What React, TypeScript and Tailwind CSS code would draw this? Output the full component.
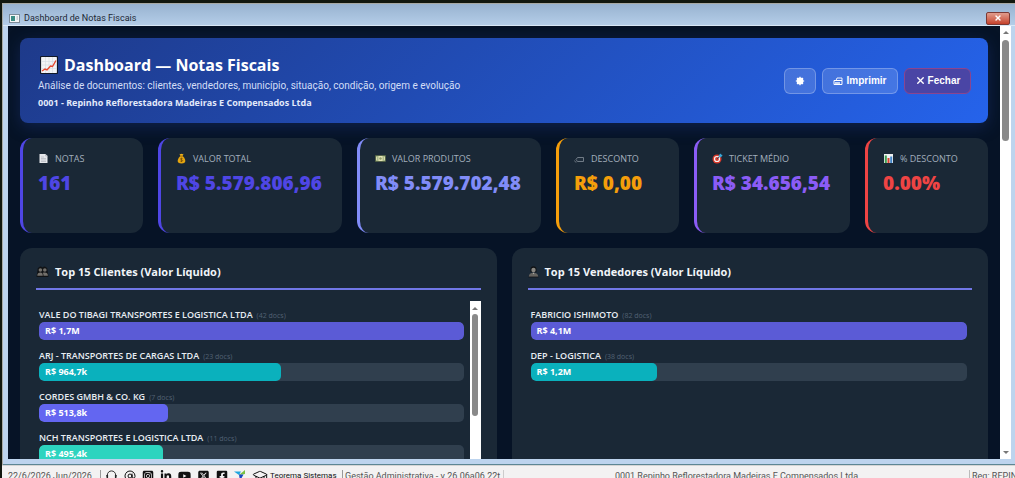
import type { ReactNode } from 'react';
import { AtSign, GraduationCap, X } from 'lucide-react';
import { FaFacebookSquare, FaLinkedinIn, FaYoutube } from 'react-icons/fa';
import { FaSquareInstagram, FaSquareXTwitter } from 'react-icons/fa6';

interface Kpi {
    label: string;
    value: string;
    color: string;
    icon: ReactNode;
}

interface RankItem {
    name: string;
    docs: number;
    value: string;
    percent: number;
    color: string;
}

/* Small pictograms */
function TrendIcon() {
    return (
        <svg viewBox="0 0 18 18" className="w-[18px] h-[18px] shrink-0" aria-hidden="true">
            <rect x="0.5" y="0.5" width="17" height="17" rx="1" fill="#f3f4f6" stroke="#111827" strokeWidth="1.2" />
            <path d="M1 5.5h16M1 9h16M1 12.5h16M5.5 1v16M9 1v16M12.5 1v16" stroke="#d5dae0" strokeWidth="0.6" />
            <path d="M2 15l3-2 2 1 3.5-4 2 .5L16 4.5" fill="none" stroke="#e8492f" strokeWidth="1.4" />
        </svg>
    );
}

function PageIcon() {
    return (
        <svg viewBox="0 0 11 11" className="w-[11px] h-[11px] shrink-0" aria-hidden="true">
            <path d="M1.5 1h6l2 2v7h-8z" fill="#e5e7eb" />
            <path d="M7.5 1v2h2M3 4h3M3 5.5h5M3 7h5M3 8.5h5" fill="none" stroke="#a8adb5" strokeWidth="0.6" />
        </svg>
    );
}

function MoneyBagIcon() {
    return (
        <svg viewBox="0 0 11 11" className="w-[11px] h-[11px] shrink-0" aria-hidden="true">
            <path d="M3.5 .8l1 .5 1-.5 1 .5 1-.5-.8 2.2h-2.4z" fill="#f2b61c" />
            <path d="M4.3 3h2.4c1.6 1.5 2.6 3.3 2.6 5 0 1.6-1.1 2.4-3.8 2.4S1.7 9.600 1.7 8c0-1.7 1-3.5 2.6-5z" fill="#e5a50f" />
            <path d="M4.1 3h2.8" stroke="#8a5a08" strokeWidth="0.8" />
            <path d="M6.6 5.6c-.4-.5-2.2-.5-2.2.4s2.300.6 2.3 1.6-2 1-2.5.3M5.5 4.8v4.2" fill="none" stroke="#6d4706" strokeWidth="0.7" />
        </svg>
    );
}

function BanknoteIcon() {
    return (
        <svg viewBox="0 0 11 11" className="w-[11px] h-[11px] shrink-0" aria-hidden="true">
            <rect x="0.5" y="2.5" width="10" height="6" fill="#a9b98a" stroke="#4b5a3b" strokeWidth="0.6" />
            <rect x="3.5" y="3" width="4" height="5" fill="#e4e3b4" />
            <circle cx="5.5" cy="5.5" r="1.2" fill="#8d9c6b" />
            <path d="M1.5 4v3M9.5 4v3" stroke="#e4e3b4" strokeWidth="0.8" />
        </svg>
    );
}

function TagIcon() {
    return (
        <svg viewBox="0 0 11 11" className="w-[11px] h-[11px] shrink-0" aria-hidden="true">
            <path d="M3.5 4.5h6v4h-6L2 6.5z" fill="#1f2d3b" stroke="#7a8590" strokeWidth="0.9" />
            <path d="M.5 7.5c0 1 .7 1.5 2 1.5" fill="none" stroke="#7a8590" strokeWidth="0.8" />
        </svg>
    );
}

function TargetIcon() {
    return (
        <svg viewBox="0 0 11 11" className="w-[11px] h-[11px] shrink-0" aria-hidden="true">
            <circle cx="5" cy="6" r="4.5" fill="#d93a2b" />
            <circle cx="5" cy="6" r="3.1" fill="#f5f5f5" />
            <circle cx="5" cy="6" r="1.9" fill="#d93a2b" />
            <path d="M5 6l3.5-3.5" stroke="#243b53" strokeWidth="0.8" />
            <path d="M6.8 4.2V2L9 .4l.3 1.3 1.4.4L9 4.2z" fill="#39a8d8" />
        </svg>
    );
}

function BarsIcon() {
    return (
        <svg viewBox="0 0 11 11" className="w-[11px] h-[11px] shrink-0" aria-hidden="true">
            <rect x="1" y="1" width="9" height="9" fill="#eef0f2" />
            <rect x="1.8" y="2.5" width="2" height="7.5" fill="#3f9f4f" />
            <rect x="4.5" y="5" width="2" height="5" fill="#d8432f" />
            <rect x="7.2" y="3.5" width="2" height="6.5" fill="#4285c9" />
        </svg>
    );
}

function PeopleIcon() {
    return (
        <svg viewBox="0 0 13 13" className="w-[13px] h-[13px] shrink-0" aria-hidden="true">
            <path d="M1.5 5a3 3 0 0 1 5-2.6A3 3 0 0 1 11.5 5l1 7H.5z" fill="#111315" />
            <g fill="#74716c">
                <circle cx="4.4" cy="5" r="1.8" />
                <circle cx="8.8" cy="5" r="1.8" />
                <path d="M1.3 10.8c0-2 1.2-3.2 3.1-3.2 1.7 0 2.4 1 2.4 3.2zM7.5 10.8c0-1.5-.2-2.3-.8-2.9.6-.3 1.2-.3 2.1-.3 1.9 0 3.1 1.2 3.1 3.2z" />
            </g>
        </svg>
    );
}

function SellerIcon() {
    return (
        <svg viewBox="0 0 11 13" className="w-[11px] h-[13px] shrink-0" aria-hidden="true">
            <path d="M2.5 4.2a3 3 0 0 1 6 0v3h-6z" fill="#111315" />
            <circle cx="5.5" cy="5" r="2.2" fill="#8a8782" />
            <path d="M.8 12c0-2.8 1.7-4.2 4.7-4.2s4.7 1.4 4.7 4.2z" fill="#65635f" />
            <path d="M4.5 7.8l1 1.5 1-1.5z" fill="#b5b3af" />
            <path d="M.5 12h10" stroke="#111315" strokeWidth="0.8" />
        </svg>
    );
}

function SunIcon() {
    return (
        <svg viewBox="0 0 10 10" className="w-2.5 h-2.5" aria-hidden="true">
            <circle cx="5" cy="5" r="3.4" fill="#fff" />
            <path d="M5 .8v8.4M.8 5h8.4M2 2l6 6M8 2L2 8" stroke="#fff" strokeWidth="1.2" />
        </svg>
    );
}

function PrinterIcon() {
    return (
        <svg viewBox="0 0 10 10" className="w-2.5 h-2.5" fill="none" stroke="#fff" aria-hidden="true">
            <path d="M3 4.5l1-2.5h5v2.5" strokeWidth="0.9" />
            <path d="M1 4.5h8v4H1z" strokeWidth="1" />
            <path d="M2 7h5" strokeWidth="1.4" />
        </svg>
    );
}

function HeadsetIcon() {
    return (
        <svg viewBox="0 0 13 13" className="w-[13px] h-3 shrink-0" aria-hidden="true">
            <path d="M2 7V5.5a4.5 4.5 0 0 1 9 0V7" fill="none" stroke="#222" />
            <path d="M.8 5.5h2v4h-1.5zM10.2 5.5h2l-.5 4h-1.5z" fill="#222" />
        </svg>
    );
}

function BrandIcon() {
    return (
        <svg viewBox="0 0 12 12" className="w-3 h-3 shrink-0" aria-hidden="true">
            <path d="M0 1.5h7L5 5z" fill="#1ea6e0" />
            <path d="M11 0v4L5 5z" fill="#7ac143" />
            <path d="M5 4.5h4.5L6 11z" fill="#1746c4" />
        </svg>
    );
}

const kpis: Kpi[] = [
    { label: 'NOTAS', value: '161', color: 'border-[#4f46e5] text-[#4f46e5]', icon: <PageIcon /> },
    { label: 'VALOR TOTAL', value: 'R$ 5.579.806,96', color: 'border-[#4f46e5] text-[#4f46e5]', icon: <MoneyBagIcon /> },
    { label: 'VALOR PRODUTOS', value: 'R$ 5.579.702,48', color: 'border-[#818cf8] text-[#818cf8]', icon: <BanknoteIcon /> },
    { label: 'DESCONTO', value: 'R$ 0,00', color: 'border-[#f59e0b] text-[#f59e0b]', icon: <TagIcon /> },
    { label: 'TICKET MÉDIO', value: 'R$ 34.656,54', color: 'border-[#8b5cf6] text-[#8b5cf6]', icon: <TargetIcon /> },
    { label: '% DESCONTO', value: '0.00%', color: 'border-[#ef4444] text-[#ef4444]', icon: <BarsIcon /> },
];

const clientes: RankItem[] = [
    { name: 'VALE DO TIBAGI TRANSPORTES E LOGISTICA LTDA', docs: 42, value: 'R$ 1,7M', percent: 100, color: 'bg-[#5b5bd6]' },
    { name: 'ARJ - TRANSPORTES DE CARGAS LTDA', docs: 23, value: 'R$ 964,7k', percent: 57, color: 'bg-[#0ab1bd]' },
    { name: 'CORDES GMBH & CO. KG', docs: 7, value: 'R$ 513,8k', percent: 30.4, color: 'bg-[#6366f1]' },
    { name: 'NCH TRANSPORTES E LOGISTICA LTDA', docs: 11, value: 'R$ 495,4k', percent: 29.3, color: 'bg-[#2dd4bf]' },
];

const vendedores: RankItem[] = [
    { name: 'FABRICIO ISHIMOTO', docs: 82, value: 'R$ 4,1M', percent: 100, color: 'bg-[#5b5bd6]' },
    { name: 'DEP - LOGISTICA', docs: 38, value: 'R$ 1,2M', percent: 29, color: 'bg-[#0ab1bd]' },
];

function KpiCard({ label, value, color, icon }: Kpi) {
    return (
        <div className={`h-[95px] min-w-0 rounded-xl border-l-[3px] bg-[#1a2836] pl-[15px] pt-3 ${color}`}>
            <div className="flex items-center gap-1.5 h-[17px] text-[9px] text-[#a3afbd]">
                {icon}
                <span>{label}</span>
            </div>
            <div className="mt-1 font-['Noto_Sans',sans-serif] text-[19px] leading-6 font-black whitespace-nowrap">{value}</div>
        </div>
    );
}

function RankRow({ name, docs, value, percent, color }: RankItem) {
    return (
        <li className="h-[41px]">
            <div className="flex items-baseline gap-1 h-[15px] leading-[15px] text-[9px] font-semibold text-[#e8edf3] whitespace-nowrap">
                {name}
                <span className="text-[7px] font-normal text-[#526173]">({docs} docs)</span>
            </div>
            <div className="h-[18px] rounded-[5px] bg-[#303f4e] overflow-hidden">
                <div
                    className={`h-full rounded-[5px] pl-1.5 text-[9px] leading-[18px] font-bold text-white whitespace-nowrap ${color}`}
                    style={{ width: `${percent}%` }}
                >
                    {value}
                </div>
            </div>
        </li>
    );
}

interface RankPanelProps {
    title: string;
    icon: ReactNode;
    items: RankItem[];
    scroll?: boolean;
}

function RankPanel({ title, icon, items, scroll }: RankPanelProps) {
    return (
        <section className="flex flex-col flex-1 min-w-0 min-h-0 rounded-t-xl bg-[#1a2836] px-4 pt-2.5">
            <h2 className="flex items-center gap-1.5 h-[27px] pb-[3px] shrink-0 box-content border-b-2 border-[#7177e6] text-[11px] leading-5 font-bold text-[#f1f5f9]">
                {icon}
                {title}
            </h2>
            <div className="flex flex-1 min-h-0 mt-[11px] overflow-hidden">
                <ul className={`flex-1 min-w-0 pl-[3px] pt-1.5 ${scroll ? 'pr-1.5' : 'pr-[5px]'}`}>
                    {items.map((item) => (
                        <RankRow key={item.name} {...item} />
                    ))}
                </ul>
                {scroll && (
                    <div className="flex flex-col items-center w-[11px] bg-white pt-1.5">
                        <span className="border-x-[3px] border-b-[3px] border-x-transparent border-b-[#777]" />
                        <span className="mt-1 w-1.5 h-[102px] rounded-full bg-[#898989]" />
                    </div>
                )}
            </div>
        </section>
    );
}

function Header() {
    return (
        <header className="flex items-center justify-between h-[85px] shrink-0 rounded-lg bg-linear-[135deg] from-[#1e3a8a] to-[#2563eb] pl-[18px] pr-[17px] text-white shadow-[0_4px_16px_#1e3a8a66]">
            <div className="pt-[3px]">
                <h1 className="flex items-center gap-1.5 pl-0.5 text-[16px] leading-6 font-bold">
                    <TrendIcon />
                    Dashboard — Notas Fiscais
                </h1>
                <p className="font-[Roboto,sans-serif] text-[10px] leading-[17px] text-[#d3def7]">
                    Análise de documentos: clientes, vendedores, município, situação, condição, origem e evolução
                </p>
                <p className="text-[9px] leading-[17px] font-bold text-[#e3eafb]">
                    0001 - Repinho Reflorestadora Madeiras E Compensados Ltda
                </p>
            </div>
            <div className="flex gap-1.5 font-['Liberation_Sans',sans-serif] text-[10px] font-bold">
                <button aria-label="Alternar tema" className="flex items-center justify-center w-8 h-[26px] rounded-md border border-white/25 bg-white/15">
                    <SunIcon />
                </button>
                <button className="flex items-center justify-center gap-[3px] w-[76px] h-[26px] rounded-md border border-white/25 bg-white/15">
                    <PrinterIcon />
                    Imprimir
                </button>
                <button className="flex items-center justify-center gap-0.5 w-[67px] h-[26px] rounded-md border border-[#8a4590] bg-[#4a45a5]">
                    <X className="w-[11px] h-[11px]" strokeWidth={3} />
                    Fechar
                </button>
            </div>
        </header>
    );
}

function TitleBar() {
    return (
        <div className="flex items-center justify-between h-[22px] shrink-0 border-b border-[#d9e8f6] bg-linear-to-b from-[#98b3d0] to-[#b4cde8] pt-[7px] pl-1.5 pr-[5px]">
            <div className="flex items-center gap-1 font-[Roboto,sans-serif] text-[9px] leading-3 text-[#1c2733]">
                <svg viewBox="0 0 11 9" className="w-[11px] h-[9px]" aria-hidden="true">
                    <rect x="0.5" y="0.5" width="10" height="8" fill="#f4f6f7" stroke="#7c8b98" />
                    <rect x="2" y="2" width="4" height="5" fill="#3b8c83" />
                    <path d="M7.5 3h1.5M7.5 5h1.5" stroke="#9aa7b1" />
                </svg>
                Dashboard de Notas Fiscais
            </div>
            <button aria-label="Fechar janela" className="flex items-center justify-center w-6 h-[13px] rounded-xs border border-[#7b3a35] bg-linear-to-b from-[#e09c8c] to-[#c5402b] text-white">
                <X className="w-2 h-2" strokeWidth={4} />
            </button>
        </div>
    );
}

function StatusBar() {
    return (
        <footer className="flex items-start h-[13px] shrink-0 overflow-hidden border-t border-[#d5d5d5] bg-[#f3f2f2] pt-1 pl-1.5 font-[Roboto,sans-serif] text-[9px] leading-3 text-[#555] whitespace-nowrap">
            <span className="w-[92px] shrink-0">22/6/2026 Jun/2026</span>
            <div className="flex items-center gap-1.5 w-[242px] shrink-0 pl-1 border-l border-[#999] text-[#111]">
                <HeadsetIcon />
                <AtSign className="w-3 h-3 shrink-0" />
                <FaSquareInstagram className="w-3 h-3 shrink-0" />
                <FaLinkedinIn className="w-3 h-3 shrink-0" />
                <FaYoutube className="w-[13px] h-3 shrink-0" />
                <FaSquareXTwitter className="w-[13px] h-3 shrink-0" />
                <FaFacebookSquare className="w-3 h-3 shrink-0" />
                <BrandIcon />
                <GraduationCap className="w-4 h-4 shrink-0 -my-0.5" strokeWidth={1.5} />
                <span className="-ml-1 text-[8px]">Teorema Sistemas</span>
            </div>
            <span className="w-[161px] shrink-0 pl-0.5 border-l border-[#999]">Gestão Administrativa - v 26.06a06.22t</span>
            <span className="flex-1 text-center border-l border-[#ccc]">0001 Repinho Reflorestadora Madeiras E Compensados Ltda</span>
            <span className="w-[46px] shrink-0 pl-0.5 border-l border-[#bbb]">Req: REPIN</span>
        </footer>
    );
}

export default function App() {
    return (
        <div className="flex flex-col h-screen overflow-hidden bg-[#12180f] pt-[3px] pl-0.5 font-['Open_Sans','Noto_Sans',sans-serif]">
            <div className="flex flex-col flex-1 min-h-0 border-t border-l border-[#a8aaa4] bg-[#bdd4ee]">
                <TitleBar />
                <div className="flex flex-1 min-h-0 ml-[5px] mr-1 mb-[5px]">
                    <main className="flex flex-col flex-1 min-w-0 min-h-0 overflow-hidden bg-[#061326] px-3 pt-3">
                        <Header />
                        <div className="grid grid-cols-[123fr_184fr_184fr_123fr_156fr_123fr] gap-[15px] mt-[15px] shrink-0">
                            {kpis.map((kpi) => (
                                <KpiCard key={kpi.label} {...kpi} />
                            ))}
                        </div>
                        <div className="flex flex-1 min-h-0 gap-[15px] mt-[15px]">
                            <RankPanel title="Top 15 Clientes (Valor Líquido)" icon={<PeopleIcon />} items={clientes} scroll />
                            <RankPanel title="Top 15 Vendedores (Valor Líquido)" icon={<SellerIcon />} items={vendedores} />
                        </div>
                    </main>
                    <div className="flex flex-col items-center justify-between w-[11px] bg-white py-[5px]">
                        <div className="flex flex-col items-center">
                            <span className="border-x-[3px] border-b-[3px] border-x-transparent border-b-[#777]" />
                            <span className="mt-1.5 w-[7px] h-[101px] rounded-full bg-[#898989]" />
                        </div>
                        <span className="border-x-[3px] border-t-[3px] border-x-transparent border-t-[#777]" />
                    </div>
                </div>
                <div className="h-px shrink-0 bg-[#5d8794]" />
            </div>
            <StatusBar />
        </div>
    );
}
